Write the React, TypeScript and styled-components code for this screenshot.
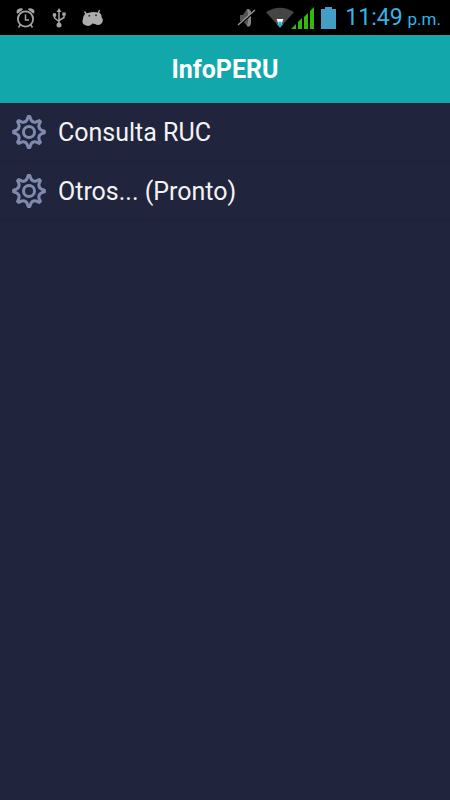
import React from "react";
import styled, { createGlobalStyle } from "styled-components";

const GlobalStyle = createGlobalStyle`
  * { box-sizing: border-box; }
  body { margin: 0; background: #20253d; font-family: Roboto, "Liberation Sans", sans-serif; }
`;

const Screen = styled.div`
  display: flex;
  flex-direction: column;
  min-height: 100vh;
  background: #20253d;
`;

const StatusBar = styled.div`
  display: flex;
  align-items: center;
  justify-content: space-between;
  height: 35px;
  padding: 0 9px 0 14px;
  background: #000;
`;

const StatusGroup = styled.div<{ $gap: number }>`
  display: flex;
  align-items: center;
  gap: ${(p) => p.$gap}px;
`;

const StatusIcon = styled.svg`
  display: block;
  flex: none;
`;

const Clock = styled.time`
  margin-left: 9px;
  padding-top: 2px;
  color: #33b5e5;
  font-size: 23px;
  line-height: 32px;
  white-space: nowrap;
`;

const Meridiem = styled.span`
  margin-left: 5px;
  font-size: 17px;
`;

const TitleBar = styled.header`
  display: flex;
  align-items: center;
  justify-content: center;
  height: 68px;
  padding-top: 2px;
  background: #12a8ab;
`;

const Title = styled.h1`
  margin: 0;
  color: #fff;
  font-size: 25px;
  font-weight: 700;
  line-height: 32px;
`;

const Menu = styled.ul`
  margin: 0;
  padding: 0;
  list-style: none;
`;

const MenuButton = styled.button`
  display: flex;
  align-items: center;
  gap: 12px;
  width: 100%;
  height: 59px;
  padding: 0 12px;
  border: 0;
  border-bottom: 1px solid #1d2136;
  background: transparent;
  color: #f3f3f3;
  font: 400 25px/32px Roboto, "Liberation Sans", sans-serif;
  text-align: left;
  cursor: pointer;
`;

const MenuLabel = styled.span`
  padding-top: 2px;
`;

const GearSvg = styled.svg`
  flex: none;
  fill: none;
  stroke: #7f8aae;
`;

const polar = (radius: number, degrees: number) => {
  const a = (degrees * Math.PI) / 180;
  return `${(radius * Math.cos(a)).toFixed(2)} ${(radius * Math.sin(a)).toFixed(2)}`;
};

const gearPath =
  Array.from({ length: 8 }, (_, i) => {
    const a = i * 45;
    return `${i ? "L" : "M"}${polar(15.4, a - 3)}L${polar(15.4, a + 3)}L${polar(12.4, a + 9)}Q${polar(9.8, a + 22.5)} ${polar(12.4, a + 36)}`;
  }).join("") + "Z";

const Gear = () => (
  <GearSvg width="34" height="34" viewBox="-17 -17 34 34" aria-hidden="true">
    <path d={gearPath} strokeWidth="3" strokeLinejoin="round" />
    <circle r="5.5" strokeWidth="3" />
  </GearSvg>
);

const AlarmIcon = () => (
  <StatusIcon width="22" height="22" viewBox="0 0 22 22" fill="none" stroke="#a5a5a5">
    <circle cx="11.5" cy="12" r="7.6" strokeWidth="1.8" />
    <path d="M11.5 7.5V13H15M6.5 17.5L4.5 20.5M16.5 17.5L18.5 20.5" strokeWidth="1.5" />
    <path d="M2.5 5.3Q2.5 1 8.5 1.4L9 2.5L3.5 6.8ZM20.5 5.3Q20.5 1 14.5 1.4L14 2.5L19.5 6.8Z" fill="#a5a5a5" stroke="none" />
  </StatusIcon>
);

const UsbIcon = () => (
  <StatusIcon width="14" height="20" viewBox="0 0 14 20" fill="none" stroke="#a5a5a5" strokeWidth="1.5">
    <path d="M7 3V17M2.5 7V10L7 13.5M12 6V9.5L7 12.5" />
    <path d="M7 0L9.5 4H4.5ZM10.3 4.5H13.7V7.5H10.3Z" fill="#a5a5a5" stroke="none" />
    <circle cx="2.5" cy="7" r="1.9" fill="#a5a5a5" stroke="none" />
    <circle cx="7" cy="17" r="2.5" fill="#a5a5a5" stroke="none" />
  </StatusIcon>
);

const DroidIcon = () => (
  <StatusIcon width="22" height="18" viewBox="0 0 22 18">
    <path d="M2.5 2.5L5 6M17.5 1L16 5" stroke="#adadad" strokeWidth="1.4" />
    <path d="M4 4.5Q10 2 16 3.5Q20 4 19.5 8Q22.5 12 19 15Q16 17 13 15L10.5 14.5Q8 18 4 16.5Q-1 15 1 10Q1 6 4 4.5Z" fill="#adadad" />
    <circle cx="7.3" cy="6.8" r="1" fill="#333" />
    <circle cx="14" cy="6.2" r="1" fill="#333" />
  </StatusIcon>
);

const MutedIcon = () => (
  <StatusIcon width="20" height="20" viewBox="0 0 20 20">
    <path d="M3 7H6L10 1Q14 1 14 5V15Q13 20 10 18L6 13H3Z" fill="#555" />
    <path d="M10 1Q14 1 14 5V15Q13 20 10 18Q12.5 10 10 1Z" fill="#858585" />
    <path d="M1 18L18 3" stroke="#000" strokeWidth="2" />
    <path d="M1 17L18 2" stroke="#999" strokeWidth="1.3" />
  </StatusIcon>
);

const WifiIcon = () => (
  <StatusIcon width="28" height="22" viewBox="0 0 29 22">
    <path d="M0 5Q14.5 -4 29 5L14.5 21Z" fill="#454545" />
    <path d="M11 12H18L16 18H13Z" fill="#fff" />
    <path d="M11 17H13V15H16V17H18L14.5 21Z" fill="#33a5d0" />
  </StatusIcon>
);

const SignalIcon = () => (
  <StatusIcon width="23" height="22" viewBox="0 0 23 22" fill="#35b90b">
    <path d="M0 22L5 17V22ZM7 15L11 11V22H7ZM13 10L17 6V22H13ZM19 4L23 0V22H19Z" />
  </StatusIcon>
);

const BatteryIcon = () => (
  <StatusIcon width="15" height="22" viewBox="0 0 15 22" fill="#429dc7">
    <path d="M4 0H11V2H15V22H0V2H4Z" />
  </StatusIcon>
);

const SignalGroup = styled.div`
  display: flex;
  align-items: center;
  margin: 0 7px 0 9px;
`;

const WifiWrap = styled.span`
  display: block;
  margin-right: -3px;
`;

const items = ["Consulta RUC", "Otros... (Pronto)"];

export default function App() {
  return (
    <Screen>
      <GlobalStyle />
      <StatusBar>
        <StatusGroup $gap={16}>
          <AlarmIcon />
          <UsbIcon />
          <DroidIcon />
        </StatusGroup>
        <StatusGroup $gap={0}>
          <MutedIcon />
          <SignalGroup>
            <WifiWrap><WifiIcon /></WifiWrap>
            <SignalIcon />
          </SignalGroup>
          <BatteryIcon />
          <Clock>11:49<Meridiem>p.m.</Meridiem></Clock>
        </StatusGroup>
      </StatusBar>
      <TitleBar>
        <Title>InfoPERU</Title>
      </TitleBar>
      <nav>
        <Menu>
          {items.map((label) => (
            <li key={label}>
              <MenuButton type="button">
                <Gear />
                <MenuLabel>{label}</MenuLabel>
              </MenuButton>
            </li>
          ))}
        </Menu>
      </nav>
    </Screen>
  );
}
